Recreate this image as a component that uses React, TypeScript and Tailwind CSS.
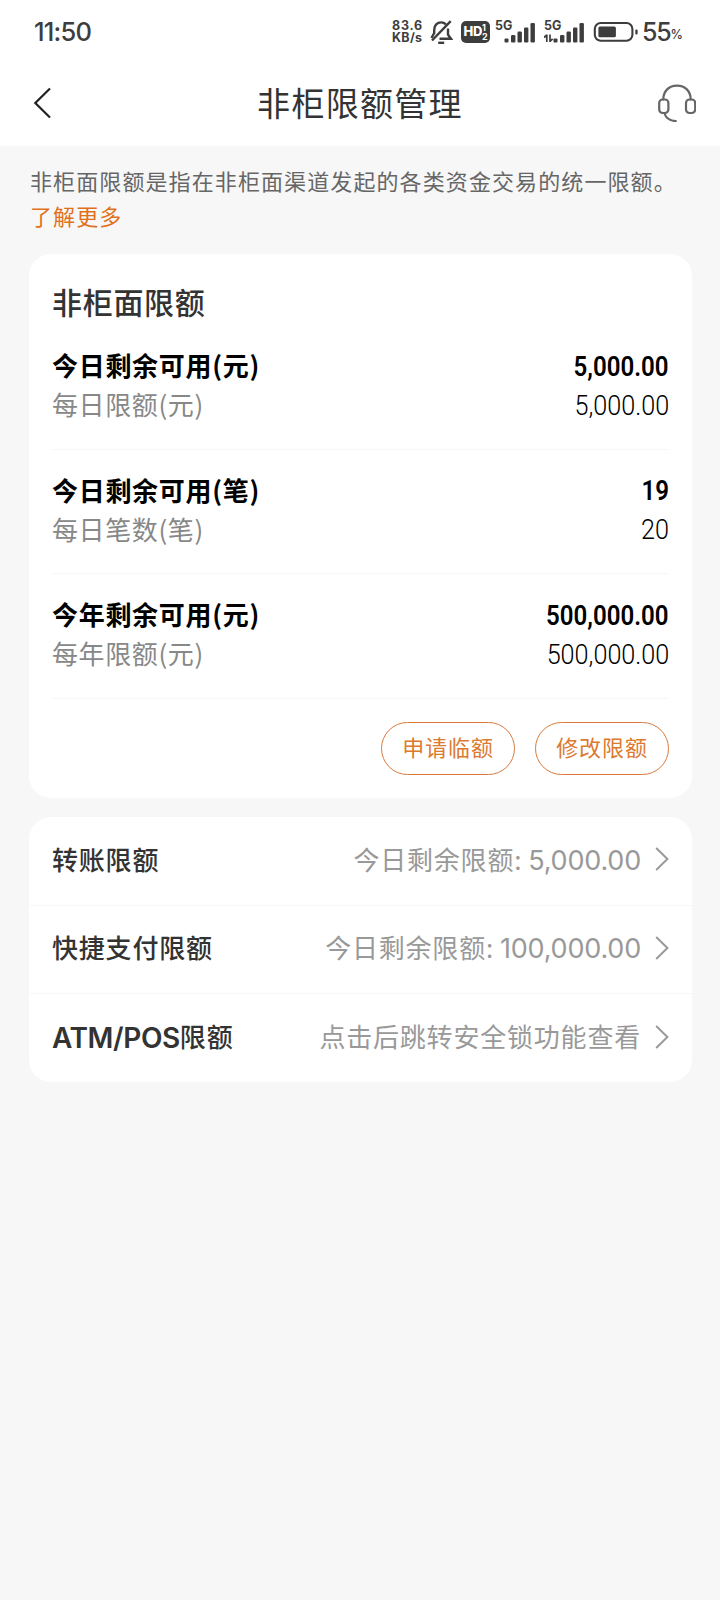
const limits = [
  {
    label: "今日剩余可用(元)",
    value: "5,000.00",
    subLabel: "每日限额(元)",
    subValue: "5,000.00",
  },
  {
    label: "今日剩余可用(笔)",
    value: "19",
    subLabel: "每日笔数(笔)",
    subValue: "20",
  },
  {
    label: "今年剩余可用(元)",
    value: "500,000.00",
    subLabel: "每年限额(元)",
    subValue: "500,000.00",
  },
];

const links = [
  { prefix: "", title: "转账限额", hint: "今日剩余限额:", amount: "5,000.00" },
  {
    prefix: "",
    title: "快捷支付限额",
    hint: "今日剩余限额:",
    amount: "100,000.00",
  },
  {
    prefix: "ATM/POS",
    title: "限额",
    hint: "点击后跳转安全锁功能查看",
    amount: "",
  },
];

const Signal = ({ data = false }: { data?: boolean }) => (
  <div className="relative w-[41px] h-[24px]">
    <span className="absolute left-0 top-0 text-[12.5px] leading-[12px] font-bold">
      5G
    </span>
    <svg className="w-full h-full" viewBox="0 0 41 24" fill="#3d3d3d">
      <rect x="9.5" y="18.5" width="4" height="4" rx="1" />
      <rect x="16" y="15" width="4.4" height="7.5" rx="1.2" />
      <rect x="22.5" y="11.5" width="4.4" height="11" rx="1.2" />
      <rect x="29" y="7.5" width="4.4" height="15" rx="1.2" />
      <rect x="35.5" y="3" width="4.4" height="19.5" rx="1.2" />
      {data && (
        <path
          d="M2.8 14.5v7.5M0 17.5L2.8 15M6 14.5v7.5M6 21.5L8.6 18.8"
          fill="none"
          stroke="#3d3d3d"
          strokeWidth="1.7"
        />
      )}
    </svg>
  </div>
);

const StatusBar = () => (
  <div className="h-[62px] pl-[34px] pr-[37px] flex items-center justify-between text-[#3d3d3d] font-['Inter']">
    <span className="text-[25.5px] leading-none font-medium tracking-[-0.8px] mt-0.5">
      11:50
    </span>
    <div className="flex items-center h-[26px] mt-0.5">
      <div className="w-[31px] text-[12.5px] leading-[12.5px] font-bold whitespace-nowrap mr-[7px]">
        <p className="tracking-[0.7px]">83.6</p>
        <p className="tracking-[0.3px]">KB/s</p>
      </div>
      <svg
        className="w-[23px] h-[24px] mr-2"
        viewBox="0 0 23 24"
        fill="none"
        stroke="#3d3d3d"
        strokeWidth="2.4"
      >
        <path d="M4.2 14V9.8C4.2 5 7.3 2.4 11 2.4c2 0 3.6.6 4.9 1.9M18 8.5v6.2l2.9 4H9.5M4.2 13L1.5 18" />
        <path d="M20.7 1.2L2 20.5" />
        <path d="M8.2 22.8h6" />
      </svg>
      <div className="w-[29px] h-[22px] rounded-[5px] bg-[#3d3d3d] text-white flex items-center justify-center mr-[5px]">
        <span className="text-[13px] font-extrabold tracking-[-0.4px]">HD</span>
        <span className="text-[9px] leading-[9px] font-bold">
          1<br />2
        </span>
      </div>
      <Signal />
      <div className="w-2" />
      <Signal data />
      <svg className="w-[45px] h-[22px] ml-2" viewBox="0 0 45 22" fill="none">
        <rect
          x="1.8"
          y="2"
          width="37.6"
          height="17.8"
          rx="6"
          stroke="#3d3d3d"
          strokeWidth="2.1"
        />
        <rect x="5.4" y="5.6" width="17.5" height="10.6" rx="1.5" fill="#3d3d3d" />
        <rect x="42.3" y="8.5" width="2.3" height="5" rx="1" fill="#3d3d3d" />
      </svg>
      <span className="text-[25px] leading-none font-medium tracking-[-1.2px] ml-1">
        55
      </span>
      <span className="text-[12.5px] leading-none font-medium mt-1.5">%</span>
    </div>
  </div>
);

const Header = () => (
  <header className="bg-white h-[146px]">
    <StatusBar />
    <div className="h-[82px] pl-[33px] pr-6 flex items-center justify-between">
      <svg
        className="w-[29px] h-[32px]"
        viewBox="0 0 29 32"
        fill="none"
        stroke="#222222"
        strokeWidth="2.2"
      >
        <path d="M17 1.5L2.3 16L17 30.5" />
      </svg>
      <h1 className="text-[33px] tracking-[1.3px] text-[#333333]">
        非柜限额管理
      </h1>
      <svg
        className="w-[38px] h-[38px]"
        viewBox="0 0 38 38"
        fill="none"
        stroke="#666666"
        strokeWidth="2.2"
        strokeLinecap="round"
      >
        <path d="M5.3 15.5C5.3 7 11 1.6 19 1.6S32.7 7 32.7 15.5" />
        <rect x="1.2" y="15.5" width="9.2" height="13.5" rx="3.5" />
        <rect x="28" y="15.5" width="9.2" height="13.5" rx="3.5" />
        <path d="M6.5 29.5C8 34 12 37 17.8 37" />
      </svg>
    </div>
  </header>
);

const App = () => {
  return (
    <div className="w-[720px] min-h-[1600px] bg-[#f7f7f7] font-['Noto_Sans_CJK_SC',sans-serif]">
      <Header />

      {/* Intro */}
      <div className="pl-[30px] pt-[17px] h-[108px] text-[22px] leading-[35px] tracking-[1.1px] whitespace-nowrap">
        <p className="text-[#666666]">
          非柜面限额是指在非柜面渠道发起的各类资金交易的统一限额。
        </p>
        <p className="text-[#e0701c]">了解更多</p>
      </div>

      {/* Limits */}
      <section className="mx-[29px] w-[663px] h-[544px] pl-[23px] pr-[23px] bg-white rounded-[22px] flex flex-col">
        <h2 className="h-[71px] pt-[25px] text-[30px] leading-[44px] font-medium tracking-[0.7px] text-[#333333]">
          非柜面限额
        </h2>
        {limits.map((item, index) => (
          <div
            key={index}
            className="h-[124.5px] pt-[22px] border-b border-[#f7f7f7]"
          >
            <div className="flex justify-between items-center h-[39px] text-[26px] font-semibold text-black">
              <span className="pb-1 tracking-[0.7px]">{item.label}</span>
              <span className="font-['Roboto'] text-[28px] origin-right scale-x-[0.86]">
                {item.value}
              </span>
            </div>
            <div className="flex justify-between items-center h-[39px] text-[26px]">
              <span className="pb-1 tracking-[0.6px] text-[#888888]">
                {item.subLabel}
              </span>
              <span className="font-['Roboto'] text-[28px] font-light text-black origin-right scale-x-[0.9]">
                {item.subValue}
              </span>
            </div>
          </div>
        ))}
        <div className="flex justify-end gap-5 pt-[23px]">
          {["申请临额", "修改限额"].map((text) => (
            <button
              key={text}
              className="w-[134px] h-[53px] pb-[3px] rounded-full border-[1.5px] border-[#d97a3a] text-[#dc7a30] text-[22px] tracking-[0.9px]"
            >
              {text}
            </button>
          ))}
        </div>
      </section>

      {/* Links */}
      <section className="mx-[29px] w-[663px] h-[265px] mt-[19px] bg-white rounded-[22px] divide-y divide-[#f7f7f7]">
        {links.map((link, index) => (
          <div
            key={index}
            className="h-[88.5px] pl-[23px] pr-[23px] pb-[3px] flex items-center justify-between text-[26px]"
          >
            <div className="flex items-center font-medium text-[#333333]">
              {link.prefix && (
                <span className="pt-0.5 font-['Inter'] text-[28px] font-semibold tracking-[-0.4px]">
                  {link.prefix}
                </span>
              )}
              <span className="pb-0.5 tracking-[0.8px]">{link.title}</span>
            </div>
            <div className="flex items-center text-[#999999]">
              <span className="pb-0.5 tracking-[0.8px]">{link.hint}</span>
              {link.amount && (
                <span className="pt-[3px] ml-1.5 font-['Inter'] text-[27px] tracking-[-0.2px]">
                  {link.amount}
                </span>
              )}
              <svg
                className="w-[14px] h-[24px] ml-[14px]"
                viewBox="0 0 14 24"
                fill="none"
                stroke="#999999"
                strokeWidth="2"
              >
                <path d="M1.2 1L12.4 12L1.2 23" />
              </svg>
            </div>
          </div>
        ))}
      </section>
    </div>
  );
};

export default App;
